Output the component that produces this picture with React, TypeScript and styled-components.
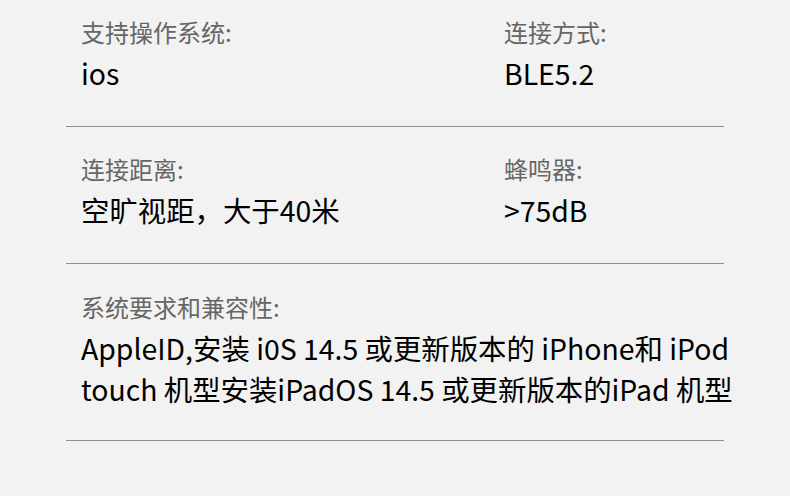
import React from 'react'
import styled, { createGlobalStyle } from 'styled-components'

const GlobalStyle = createGlobalStyle`
  html, body {
    margin: 0;
    padding: 0;
    background: #f2f2f2;
  }
  body {
    font-family: "Noto Sans CJK SC", "Noto Sans", sans-serif;
  }
`

const Page = styled.div`
  width: 790px;
  height: 496px;
  background: #f2f2f2;
  padding: 0 66px;
  box-sizing: border-box;
`

const Section = styled.div<{ top: number; bottom: number }>`
  display: grid;
  grid-template-columns: 423px 1fr;
  padding: ${({ top }) => top}px 0 ${({ bottom }) => bottom}px 15px;
  border-bottom: 1px solid #8f8f8f;
`

const Field = styled.div<{ wide?: boolean }>`
  display: flex;
  flex-direction: column;
  gap: 5px;
  grid-column: ${({ wide }) => (wide ? '1 / -1' : 'auto')};
`

const Label = styled.div`
  font-size: 24px;
  line-height: 30px;
  color: #666666;
  white-space: nowrap;
`

const Value = styled.div`
  font-size: 28.4px;
  line-height: 41px;
  color: #000000;
  white-space: nowrap;
`

const App: React.FC = () => (
  <Page>
    <GlobalStyle />
    <Section top={17} bottom={33}>
      <Field>
        <Label>支持操作系统:</Label>
        <Value>ios</Value>
      </Field>
      <Field>
        <Label>连接方式:</Label>
        <Value>BLE5.2</Value>
      </Field>
    </Section>
    <Section top={27} bottom={33}>
      <Field>
        <Label>连接距离:</Label>
        <Value>空旷视距，大于40米</Value>
      </Field>
      <Field>
        <Label>蜂鸣器:</Label>
        <Value>&gt;75dB</Value>
      </Field>
    </Section>
    <Section top={28} bottom={31}>
      <Field wide>
        <Label>系统要求和兼容性:</Label>
        <Value>
          AppleID,安装 i0S 14.5 或更新版本的 iPhone和 iPod
          <br />
          touch 机型安装iPadOS 14.5 或更新版本的iPad 机型
        </Value>
      </Field>
    </Section>
  </Page>
)

export default App
